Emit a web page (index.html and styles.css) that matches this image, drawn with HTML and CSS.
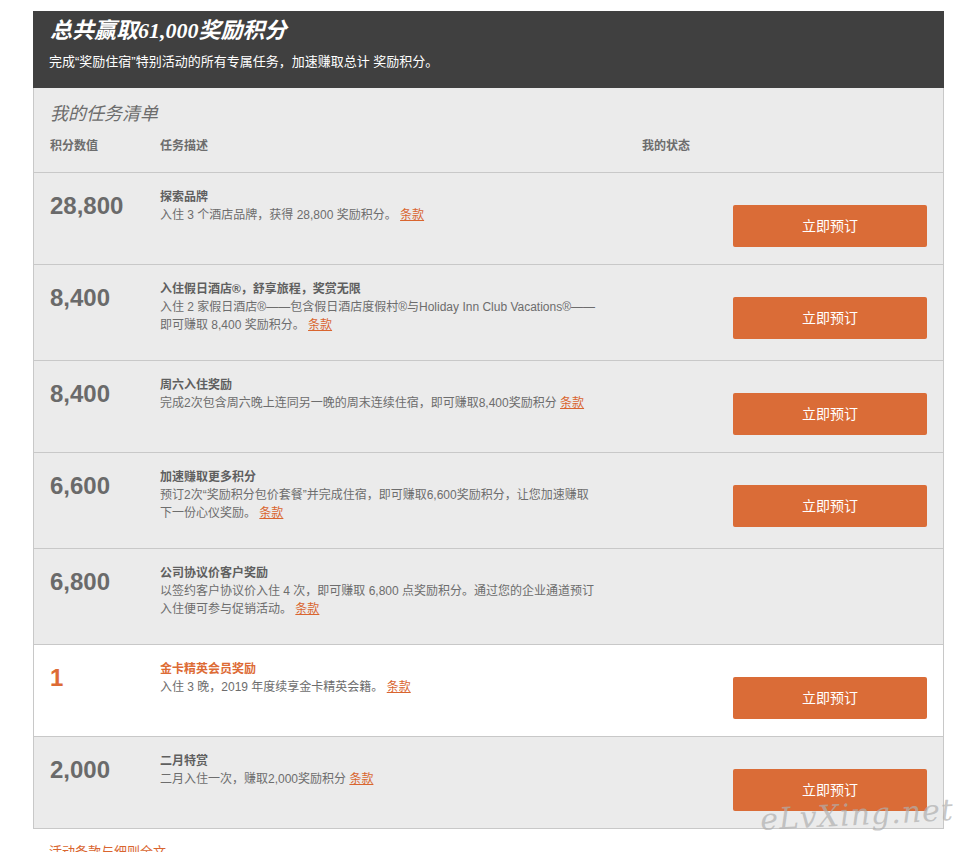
FILE: index.html
```html
<!DOCTYPE html>
<html lang="zh-CN">
<head>
<meta charset="utf-8">
<title>奖励住宿</title>
<link rel="stylesheet" href="styles.css">
</head>
<body>
<div class="promo">
  <div class="promo-head">
    <h1 class="promo-title">总共赢取61,000奖励积分</h1>
    <p class="promo-sub">完成“奖励住宿”特别活动的所有专属任务，加速赚取总计 奖励积分。</p>
  </div>
  <div class="list-head">
    <h2 class="list-title">我的任务清单</h2>
    <div class="cols">
      <span>积分数值</span>
      <span>任务描述</span>
      <span>我的状态</span>
    </div>
  </div>

  <div class="task">
    <div class="pts">28,800</div>
    <div class="desc">
      <div class="t-title">探索品牌</div>
      <div class="t-text">入住 3 个酒店品牌，获得 28,800 奖励积分。 <a class="terms" href="#">条款</a></div>
    </div>
    <div class="act"><a class="btn" href="#">立即预订</a></div>
  </div>

  <div class="task">
    <div class="pts">8,400</div>
    <div class="desc">
      <div class="t-title">入住假日酒店®，舒享旅程，奖赏无限</div>
      <div class="t-text">入住 2 家假日酒店®——包含假日酒店度假村®与Holiday Inn Club Vacations®——<br>即可赚取 8,400 奖励积分。 <a class="terms" href="#">条款</a></div>
    </div>
    <div class="act"><a class="btn" href="#">立即预订</a></div>
  </div>

  <div class="task">
    <div class="pts">8,400</div>
    <div class="desc">
      <div class="t-title">周六入住奖励</div>
      <div class="t-text">完成2次包含周六晚上连同另一晚的周末连续住宿，即可赚取8,400奖励积分 <a class="terms" href="#">条款</a></div>
    </div>
    <div class="act"><a class="btn" href="#">立即预订</a></div>
  </div>

  <div class="task">
    <div class="pts">6,600</div>
    <div class="desc">
      <div class="t-title">加速赚取更多积分</div>
      <div class="t-text">预订2次“奖励积分包价套餐”并完成住宿，即可赚取6,600奖励积分，让您加速赚取<br>下一份心仪奖励。 <a class="terms" href="#">条款</a></div>
    </div>
    <div class="act"><a class="btn" href="#">立即预订</a></div>
  </div>

  <div class="task">
    <div class="pts">6,800</div>
    <div class="desc">
      <div class="t-title">公司协议价客户奖励</div>
      <div class="t-text">以签约客户协议价入住 4 次，即可赚取 6,800 点奖励积分。通过您的企业通道预订<br>入住便可参与促销活动。 <a class="terms" href="#">条款</a></div>
    </div>
    <div class="act"></div>
  </div>

  <div class="task task-gold">
    <div class="pts">1</div>
    <div class="desc">
      <div class="t-title">金卡精英会员奖励</div>
      <div class="t-text">入住 3 晚，2019 年度续享金卡精英会籍。 <a class="terms" href="#">条款</a></div>
    </div>
    <div class="act"><a class="btn" href="#">立即预订</a></div>
  </div>

  <div class="task">
    <div class="pts">2,000</div>
    <div class="desc">
      <div class="t-title">二月特赏</div>
      <div class="t-text">二月入住一次，赚取2,000奖励积分 <a class="terms" href="#">条款</a></div>
    </div>
    <div class="act"><a class="btn" href="#">立即预订</a></div>
  </div>
</div>
<a class="full-terms" href="#">活动条款与细则全文</a>
<div class="watermark">eLvXing.net</div>
</body>
</html>
```

FILE: styles.css
```css
* { box-sizing: border-box; }

body {
  margin: 0;
  background: #fff;
  font-family: "Liberation Sans", "Noto Sans CJK SC", sans-serif;
  color: #666;
  position: relative;
  min-height: 852px;
}

.promo {
  width: 911px;
  margin: 11px 0 0 33px;
}

.promo-head {
  background: #404040;
  color: #fff;
  padding: 7px 17px 17px 16px;
}

.promo-title {
  margin: 0 0 10px 1px;
  font-family: "Liberation Serif", "Noto Sans CJK SC", serif;
  font-style: italic;
  font-weight: bold;
  font-size: 22px;
  line-height: 25px;
}

.promo-sub {
  margin: 0;
  font-size: 13px;
  line-height: 18px;
}

.list-head {
  background: #ebebeb;
  border-left: 1px solid #c8c8c8;
  border-right: 1px solid #c8c8c8;
  border-bottom: 1px solid #c8c8c8;
  padding: 14px 16px 17px;
}

.list-title {
  margin: 0 0 11px;
  font-size: 18px;
  line-height: 24px;
  font-style: italic;
  font-weight: normal;
  color: #6d6d6d;
}

.cols {
  display: grid;
  grid-template-columns: 110px 482px 1fr;
  font-size: 12px;
  line-height: 18px;
  font-weight: bold;
  color: #6d6d6d;
}

.task {
  display: grid;
  grid-template-columns: 110px 482px 1fr;
  background: #ebebeb;
  border-left: 1px solid #c8c8c8;
  border-right: 1px solid #c8c8c8;
  border-bottom: 1px solid #c8c8c8;
  padding: 15px 16px 17px;
}

.task-gold { background: #fff; }

.pts {
  font-size: 24px;
  line-height: 36px;
  font-weight: bold;
  color: #6a6a6a;
}

.desc {
  padding-bottom: 9px;
  font-size: 12px;
  line-height: 18px;
}

.t-title {
  font-weight: bold;
  color: #5f5f5f;
}

.t-text {
  color: #6d6d6d;
  white-space: nowrap;
}

.task-gold .pts,
.task-gold .t-title { color: #dd6b35; }

.terms {
  color: #d9652f;
  text-decoration: underline;
}

.act {
  display: flex;
  justify-content: flex-end;
  align-items: flex-start;
}

.btn {
  display: block;
  width: 194px;
  height: 42px;
  margin-top: 17px;
  background: #da6c37;
  border-radius: 2px;
  color: #fff;
  font-size: 14px;
  line-height: 42px;
  text-align: center;
  text-decoration: none;
}

.full-terms {
  display: block;
  margin: 14px 0 0 49px;
  font-size: 13px;
  line-height: 18px;
  color: #d9652f;
  text-decoration: none;
}

.watermark {
  position: absolute;
  left: 760px;
  top: 797px;
  font-family: "DejaVu Serif", serif;
  font-style: italic;
  font-size: 30px;
  letter-spacing: 1px;
  color: rgba(175, 175, 175, 0.7);
  transform: rotate(-3deg);
  pointer-events: none;
}
```
